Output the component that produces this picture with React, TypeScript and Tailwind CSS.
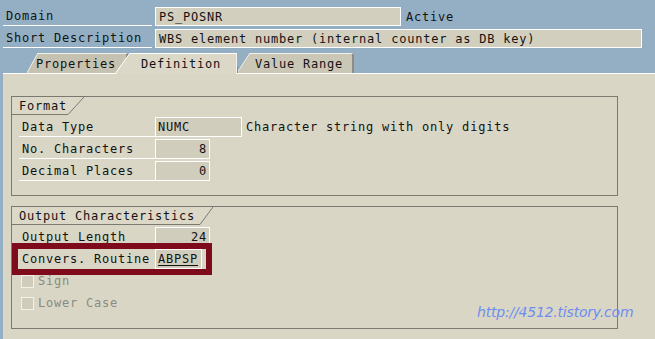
import React from "react";

const mono = { fontFamily: '"DejaVu Sans Mono", "Liberation Mono", monospace' };

function Label({ text, w }: { text: string; w: string }) {
  return (
    <div className={`${w} h-[20px] border-b border-white flex items-center pl-[3px] whitespace-pre`}>
      {text}
    </div>
  );
}

function Field({ text, w, right, underline }: { text: string; w: string; right?: boolean; underline?: boolean }) {
  return (
    <div
      className={`${w} h-[20px] bg-[#d0cdbd] border border-white flex items-center px-[2px] whitespace-pre ${
        right ? "justify-end" : ""
      } ${underline ? "underline underline-offset-2" : ""}`}
    >
      {text}
    </div>
  );
}

function GroupTitle({ text, w, slant }: { text: string; w: string; slant: number }) {
  return (
    <div className="flex h-[18px]">
      <div className={`${w} h-[18px] border-b border-[#7b7a70] flex items-center pl-[7px] whitespace-pre bg-[#dbd8c8]`}>
        {text}
      </div>
      <svg width={slant} height={18} className="block">
        <polygon points={`0,0 ${slant},0 0,17.5`} fill="#dbd8c8" />
        <line x1={0} y1={17.5} x2={slant} y2={0} stroke="#7b7a70" strokeWidth={1} />
      </svg>
    </div>
  );
}

function Check({ text }: { text: string }) {
  return (
    <div className="flex items-center h-[20px] pl-[2px]">
      <div className="w-[13px] h-[13px] border border-[#f2f1ea] bg-[#cfccbc]" />
      <span className="ml-[4px] text-[#8b8a80] whitespace-pre">{text}</span>
    </div>
  );
}

export default function App() {
  return (
    <div
      className="relative w-[655px] h-[339px] bg-[#94afc4] flex flex-col text-[12px] tracking-[0.78px] text-[#121212] overflow-hidden"
      style={mono}
    >
      {/* header */}
      <div className="pt-[7px] pl-[3px] flex flex-col gap-[3px]">
        <div className="flex h-[19px] items-stretch">
          <div className="w-[149px] border-b border-white flex items-center pl-[3px]">Domain</div>
          <div className="ml-[3px] w-[246px] bg-[#d2cfbf] border border-white flex items-center pl-[3px]">PS_POSNR</div>
          <div className="ml-[5px] flex items-center">Active</div>
        </div>
        <div className="flex h-[19px] items-stretch">
          <div className="w-[149px] border-b border-white flex items-center pl-[3px] whitespace-pre">Short Description</div>
          <div className="ml-[3px] w-[487px] bg-[#d2cfbf] border border-white flex items-center pl-[3px] whitespace-pre">
            WBS element number (internal counter as DB key)
          </div>
        </div>
      </div>

      {/* tabs */}
      <div className="mt-[5px] h-[20px] flex items-start pl-[27px] relative z-10">
        <div className="flex h-[20px]">
          <svg width={11} height={20} className="block">
            <polygon points="0,20 11,0 11,20" fill="#c6c2b1" />
            <line x1={0} y1={20} x2={11} y2={0} stroke="#f0efe8" strokeWidth={1} />
          </svg>
          <div className="w-[90px] h-[20px] bg-[#c6c2b1] border-t border-[#f0efe8] border-r-2 border-r-[#8e8c80] flex items-center">
            <span className="-ml-[2px]">Properties</span>
          </div>
        </div>
        <div className="flex h-[21px] -ml-[13px] relative z-10">
          <svg width={15} height={21} className="block">
            <polygon points="0,21 15,0 15,21" fill="#dbd8c8" />
            <line x1={0} y1={21} x2={15} y2={0} stroke="#ffffff" strokeWidth={1} />
          </svg>
          <div className="w-[107px] h-[21px] bg-[#dbd8c8] border-t border-white border-r border-r-[#f4f3ec] flex items-center pl-[11px] pb-[1px]">
            Definition
          </div>
        </div>
        <div className="flex h-[20px]">
          <svg width={13} height={20} className="block">
            <polygon points="0,20 13,0 13,20" fill="#cbc7b6" />
            <line x1={0} y1={20} x2={13} y2={0} stroke="#f0efe8" strokeWidth={1} />
            <line x1={0.5} y1={13} x2={0.5} y2={20} stroke="#8e8c80" strokeWidth={1} />
          </svg>
          <div className="w-[104px] h-[20px] bg-[#cbc7b6] border-t border-[#f0efe8] border-r-2 border-r-[#8e8c80] rounded-tr-[3px] flex items-center pl-[5px] whitespace-pre">
            Value Range
          </div>
        </div>
      </div>

      {/* content */}
      <div className="ml-[3px] flex-1 bg-[#d9d6c6] border-t border-white flex flex-col">
        {/* Format */}
        <div className="mt-[22px] ml-[8px] w-[607px] h-[100px] border border-[#7b7a70] flex flex-col">
          <GroupTitle text="Format" w="w-[56px]" slant={16} />
          <div className="mt-[2px] pl-[7px] flex flex-col gap-[2px]">
            <div className="flex">
              <Label text="Data Type" w="w-[136px]" />
              <Field text="NUMC" w="w-[87px]" />
              <div className="ml-[4px] h-[20px] flex items-center whitespace-pre">Character string with only digits</div>
            </div>
            <div className="flex">
              <Label text="No. Characters" w="w-[136px]" />
              <Field text="8" w="w-[55px]" right />
            </div>
            <div className="flex">
              <Label text="Decimal Places" w="w-[136px]" />
              <Field text="0" w="w-[55px]" right />
            </div>
          </div>
        </div>

        {/* Output Characteristics */}
        <div className="mt-[10px] ml-[8px] w-[607px] h-[123px] border border-[#7b7a70] flex flex-col relative">
          <GroupTitle text="Output Characteristics" w="w-[188px]" slant={13} />
          <div className="mt-[2px] pl-[7px] flex flex-col gap-[2px]">
            <div className="flex">
              <Label text="Output Length" w="w-[136px]" />
              <Field text="24" w="w-[55px]" right />
            </div>
            <div className="flex">
              <div className="w-[136px] h-[20px] flex items-center pl-[3px] whitespace-pre">Convers. Routine</div>
              <Field text="ABPSP" w="w-[47px]" underline />
            </div>
            <Check text="Sign" />
            <Check text="Lower Case" />
          </div>
          <div className="absolute left-0 top-[36px] w-[200px] h-[32px] border-[6px] border-[#7d0b1c] pointer-events-none" />
        </div>
      </div>

      {/* watermark */}
      <div
        className="absolute left-[477px] top-[302px] text-[14px] italic tracking-[-0.2px] text-[#6d8ef0]"
        style={{ fontFamily: '"DejaVu Sans", sans-serif' }}
      >
        http://4512.tistory.com
      </div>
    </div>
  );
}
